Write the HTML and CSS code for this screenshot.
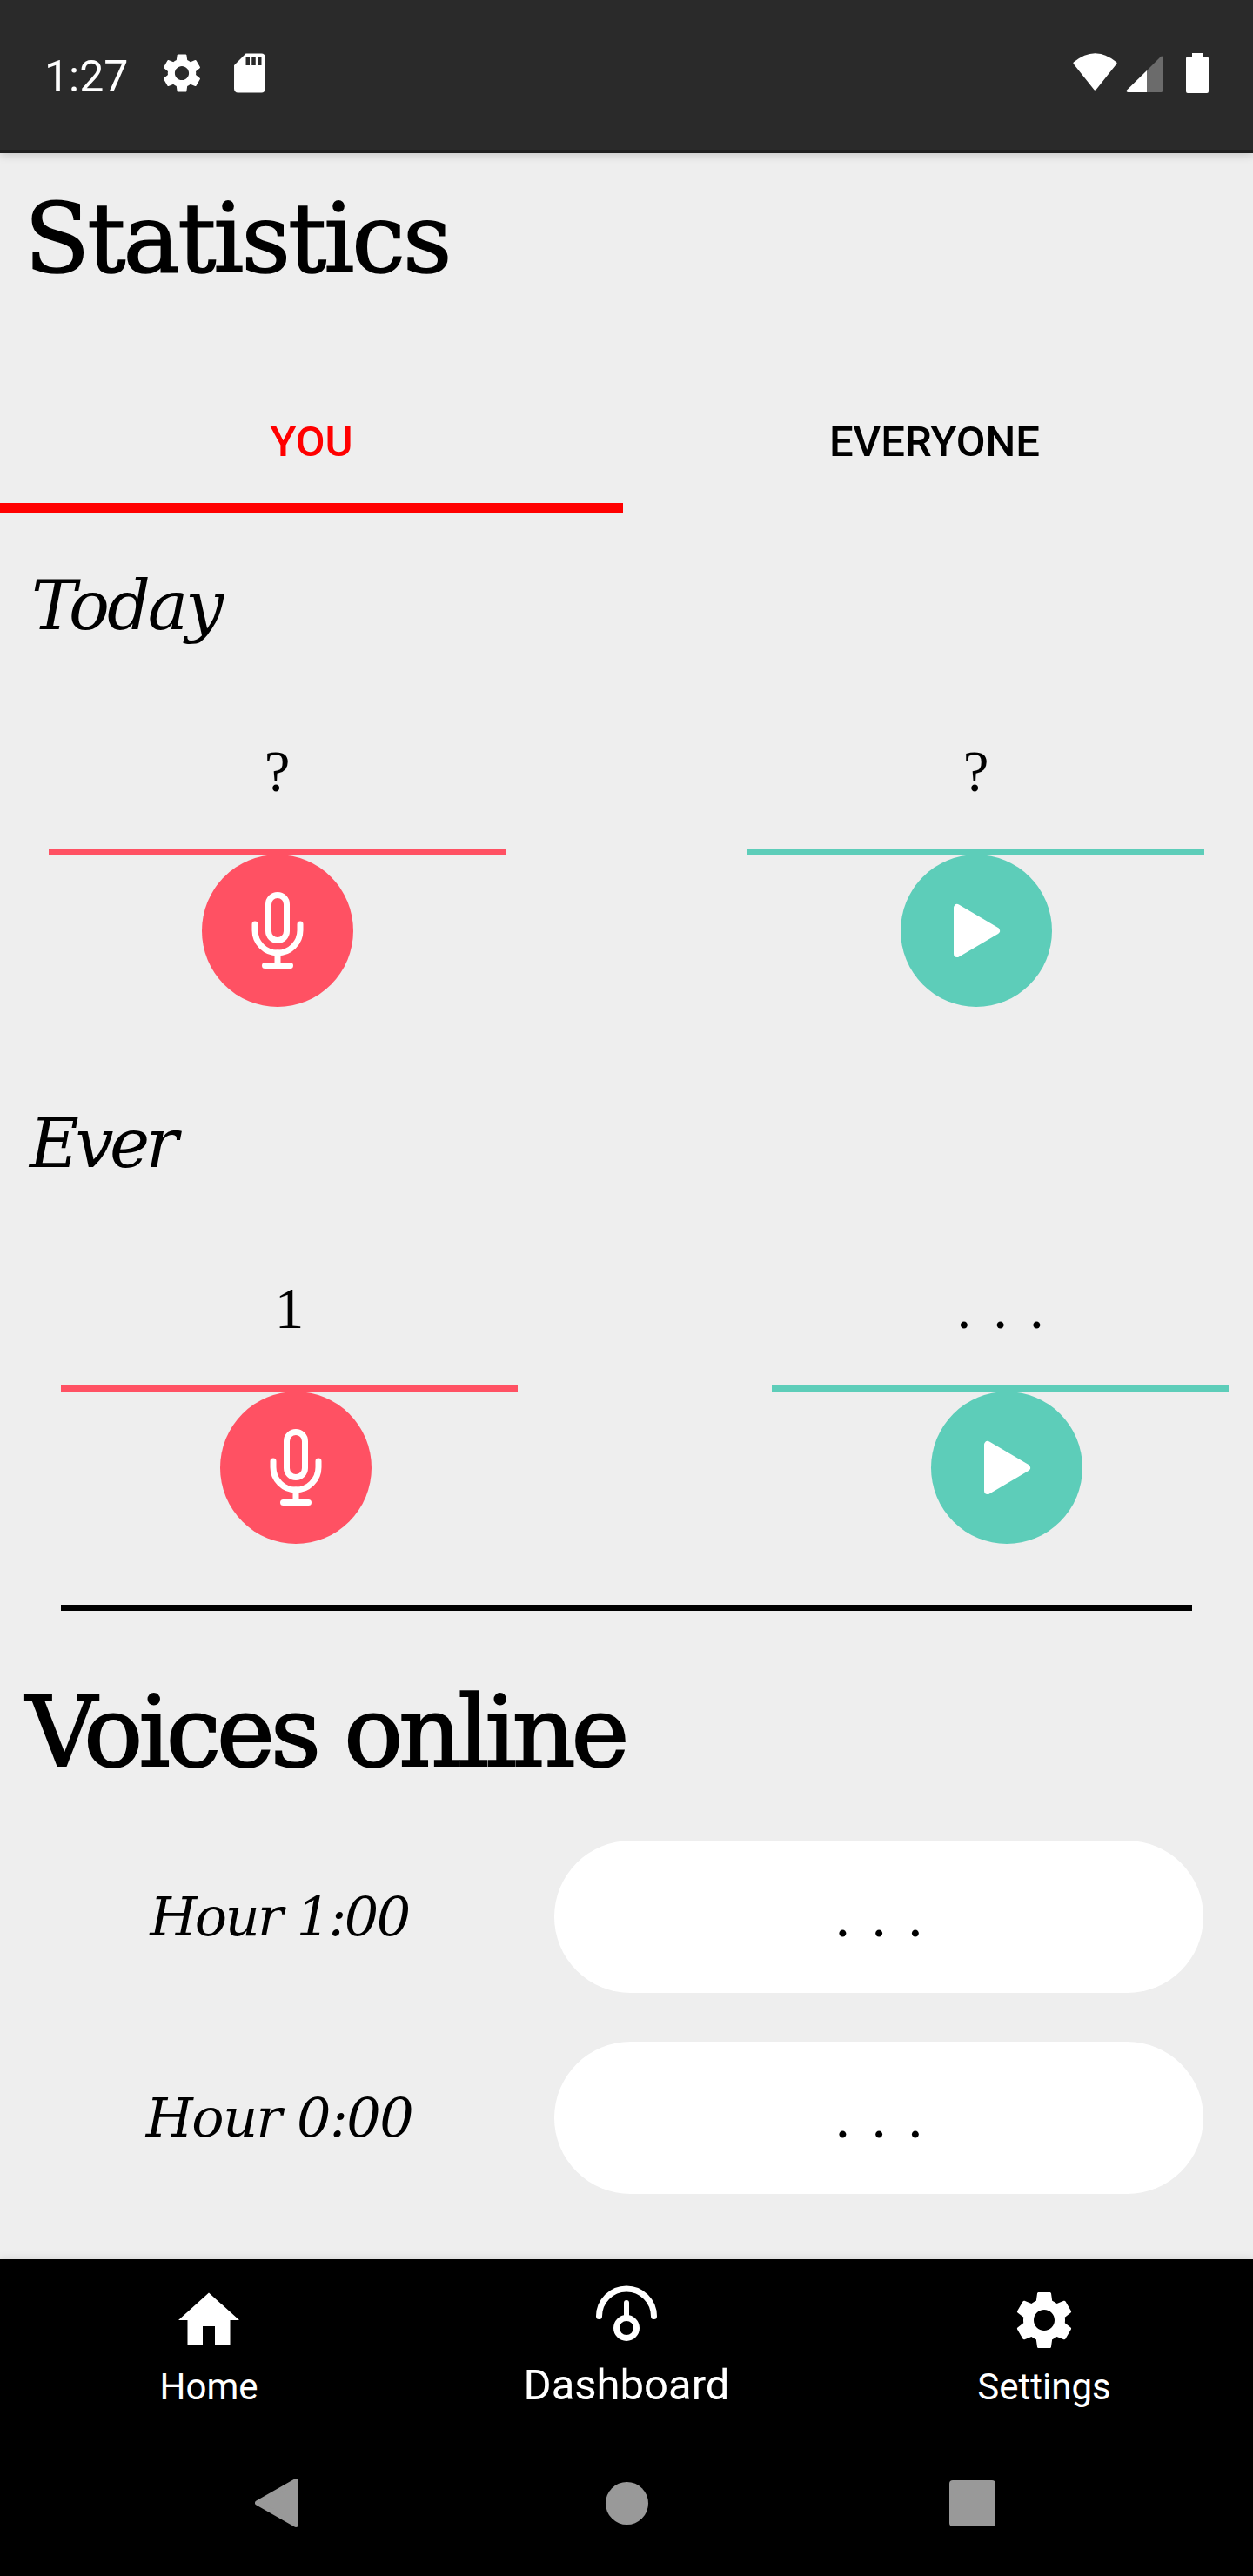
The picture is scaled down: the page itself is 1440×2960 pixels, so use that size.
FILE: index.html
```html
<!DOCTYPE html>
<html lang="en">
  <head>
    <meta charset="UTF-8" />
    <meta name="viewport" content="width=device-width, initial-scale=1.0" />
    <title>Statistics</title>
    <link rel="stylesheet" href="styles.css">
  </head>
  <body>
    <div class="status-bar">
      <span class="status-time">1:27</span>
      <svg class="status-gear" viewBox="0 0 24 24"><path class="gear" d="M19.14 12.94c.04-.3.06-.61.06-.94 0-.32-.02-.64-.07-.94l2.03-1.58c.18-.14.23-.41.12-.61l-1.92-3.32c-.12-.22-.37-.29-.59-.22l-2.39.96c-.5-.38-1.03-.7-1.62-.94l-.36-2.54c-.04-.24-.24-.41-.48-.41h-3.84c-.24 0-.43.17-.47.41l-.36 2.54c-.59.24-1.13.57-1.62.94l-2.39-.96c-.22-.08-.47 0-.59.22L2.74 8.87c-.12.21-.08.47.12.61l2.03 1.58c-.05.3-.09.63-.09.94s.02.64.07.94l-2.03 1.58c-.18.14-.23.41-.12.61l1.92 3.32c.12.22.37.29.59.22l2.39-.96c.5.38 1.03.7 1.62.94l.36 2.54c.05.24.24.41.48.41h3.84c.24 0 .44-.17.47-.41l.36-2.54c.59-.24 1.13-.56 1.62-.94l2.39.96c.22.08.47 0 .59-.22l1.92-3.32c.12-.22.07-.47-.12-.61l-2.01-1.58zM12 15.6c-1.98 0-3.6-1.62-3.6-3.6s1.62-3.6 3.6-3.6 3.6 1.62 3.6 3.6-1.62 3.6-3.6 3.6z"/></svg>
      <svg class="status-sd" viewBox="0 0 24 24"><path class="gear" d="M18 2h-8L4.02 8 4 20c0 1.1.9 2 2 2h12c1.1 0 2-.9 2-2V4c0-1.1-.9-2-2-2zm-6 6h-2V4h2v4zm3 0h-2V4h2v4zm3 0h-2V4h2v4z"/></svg>
      <div class="status-right">
        <svg class="status-wifi" viewBox="0 0 53 46"><path fill="#fff" stroke="#fff" stroke-width="3" stroke-linejoin="round" d="M3 11.5Q26.5-8 50 11.5L26.5 41z"/></svg>
        <svg class="status-signal" viewBox="0 0 42 46">
          <path fill="#6b6b6b" d="M24 20L39.5 4.500Q42 2.500 42 5V43.500Q42 45 40.500 45H24z"/>
          <path fill="#fff" d="M24 20V45H2.500Q-.5 44.500 1 42.500z"/>
        </svg>
        <svg class="status-battery" viewBox="0 0 26 46"><path fill="#fff" d="M7 0h12v4h5q2 0 2 2v38q0 2-2 2H2q-2 0-2-2V6q0-2 2-2h5z"/></svg>
      </div>
    </div>

    <div class="main">
      <h1 class="title">Statistics</h1>

      <div class="tabs">
        <div class="tab tab-active">YOU</div>
        <div class="tab">EVERYONE</div>
      </div>

      <h2 class="period period-today">Today</h2>
      <div class="stat-row stat-row-today">
        <div class="stat stat-red">
          <div class="stat-value">?</div>
          <div class="stat-btn">
            <svg class="btn-icon" viewBox="0 0 174 174">
              <g fill="none" stroke="#fff" stroke-width="7" stroke-linecap="round">
                <rect x="76.500" y="46.500" width="21" height="52" rx="10.500"/>
                <path d="M61 80v7a26 26 0 0 0 52 0v-7"/>
                <path d="M87 113v15M72.500 127.500h29"/>
              </g>
            </svg>
          </div>
        </div>
        <div class="stat stat-teal">
          <div class="stat-value">?</div>
          <div class="stat-btn">
            <svg class="btn-icon" viewBox="0 0 174 174"><path fill="#fff" stroke="#fff" stroke-width="8" stroke-linejoin="round" d="M65 61v53l45-26.500z"/></svg>
          </div>
        </div>
      </div>

      <h2 class="period period-ever">Ever</h2>
      <div class="stat-row stat-row-ever">
        <div class="stat stat-red">
          <div class="stat-value">1</div>
          <div class="stat-btn">
            <svg class="btn-icon" viewBox="0 0 174 174">
              <g fill="none" stroke="#fff" stroke-width="7" stroke-linecap="round">
                <rect x="76.500" y="46.500" width="21" height="52" rx="10.500"/>
                <path d="M61 80v7a26 26 0 0 0 52 0v-7"/>
                <path d="M87 113v15M72.500 127.500h29"/>
              </g>
            </svg>
          </div>
        </div>
        <div class="stat stat-teal">
          <div class="stat-value dots">...</div>
          <div class="stat-btn">
            <svg class="btn-icon" viewBox="0 0 174 174"><path fill="#fff" stroke="#fff" stroke-width="8" stroke-linejoin="round" d="M65 61v53l45-26.500z"/></svg>
          </div>
        </div>
      </div>

      <div class="divider"></div>

      <h1 class="title-voices">Voices online</h1>

      <div class="hours">
        <div class="hour-row">
          <div class="hour-label">Hour 1:00</div>
          <div class="hour-pill dots">...</div>
        </div>
        <div class="hour-row">
          <div class="hour-label hour-label-wide">Hour 0:00</div>
          <div class="hour-pill dots">...</div>
        </div>
      </div>
    </div>

    <div class="bottom">
      <div class="nav">
        <div class="nav-item">
          <svg class="nav-icon" viewBox="0 0 24 24"><path fill="#fff" d="M10 20v-6h4v6h5v-8h3L12 3 2 12h3v8z"/></svg>
          <div class="nav-label">Home</div>
        </div>
        <div class="nav-item nav-item-active">
          <svg class="nav-icon" viewBox="0 0 84 84">
            <g fill="none" stroke="#fff" stroke-width="7" stroke-linecap="round">
              <path d="M10.500 37.500a31.500 31.500 0 0 1 63 0"/>
              <circle cx="42" cy="51" r="11.500"/>
              <path stroke-width="6" d="M42 22v17"/>
            </g>
          </svg>
          <div class="nav-label">Dashboard</div>
        </div>
        <div class="nav-item">
          <svg class="nav-icon nav-icon-gear" viewBox="0 0 24 24"><path class="gear" d="M19.14 12.94c.04-.3.06-.61.06-.94 0-.32-.02-.64-.07-.94l2.03-1.58c.18-.14.23-.41.12-.61l-1.92-3.32c-.12-.22-.37-.29-.59-.22l-2.39.96c-.5-.38-1.03-.7-1.62-.94l-.36-2.54c-.04-.24-.24-.41-.48-.41h-3.84c-.24 0-.43.17-.47.41l-.36 2.54c-.59.24-1.13.57-1.62.94l-2.39-.96c-.22-.08-.47 0-.59.22L2.74 8.87c-.12.21-.08.47.12.61l2.03 1.58c-.05.3-.09.63-.09.94s.02.64.07.94l-2.03 1.58c-.18.14-.23.41-.12.61l1.92 3.32c.12.22.37.29.59.22l2.39-.96c.5.38 1.03.7 1.62.94l.36 2.54c.05.24.24.41.48.41h3.84c.24 0 .44-.17.47-.41l.36-2.54c.59-.24 1.13-.56 1.62-.94l2.39.96c.22.08.47 0 .59-.22l1.92-3.32c.12-.22.07-.47-.12-.61l-2.01-1.58zM12 15.6c-1.98 0-3.6-1.62-3.6-3.6s1.62-3.6 3.6-3.6 3.6 1.62 3.6 3.6-1.62 3.6-3.6 3.6z"/></svg>
          <div class="nav-label">Settings</div>
        </div>
      </div>
      <div class="sys-nav">
        <svg class="sys-back" viewBox="0 0 50 56"><path fill="#999" stroke="#999" stroke-width="6" stroke-linejoin="round" d="M3 28L47 3v50z"/></svg>
        <div class="sys-home"></div>
        <div class="sys-recent"></div>
      </div>
    </div>
  </body>
</html>
```
FILE: styles.css
```css
* {
  box-sizing: border-box;
}
html,
body {
  margin: 0;
  padding: 0;
}
body {
  width: 1440px;
  height: 2960px;
  display: flex;
  flex-direction: column;
  overflow: hidden;
  font-family: Roboto, sans-serif;
  background-color: #eee;
  color: #000;
}
.gear {
  fill: #fff;
}

/* status bar */
.status-bar {
  height: 176px;
  flex: none;
  display: flex;
  align-items: center;
  padding: 0 51px 4px;
  background-color: #2a2a2a;
  border-bottom: 4px solid #1f1f1f;
  box-shadow: 0 2px 10px rgba(0, 0, 0, 0.18);
  z-index: 1;
}
.status-time {
  width: 94px;
  padding-top: 7px;
  font-size: 50px;
  line-height: 56px;
  color: #fff;
  white-space: nowrap;
}
.status-gear {
  width: 54px;
  height: 54px;
  margin-left: 37px;
}
.status-sd {
  width: 54px;
  height: 54px;
  margin-left: 24px;
}
.status-right {
  margin-left: auto;
  display: flex;
  align-items: center;
}
.status-wifi {
  width: 53px;
  height: 46px;
}
.status-signal {
  width: 42px;
  height: 46px;
  margin-left: 9px;
}
.status-battery {
  width: 26px;
  height: 46px;
  margin-left: 27px;
}

/* page */
.main {
  flex: 1;
  min-height: 0;
}
.title {
  margin: 43px 0 0;
  padding-left: 28px;
  font-family: "DejaVu Serif", serif;
  font-weight: normal;
  font-size: 110px;
  line-height: 110px;
  letter-spacing: -3px;
  -webkit-text-stroke: 1.5px #000;
}
.tabs {
  display: flex;
  margin-top: 155px;
}
.tab {
  width: 716px;
  padding-bottom: 46px;
  border-bottom: 11px solid transparent;
  text-align: center;
  font-size: 49px;
  line-height: 48px;
  font-weight: 500;
}
.tab-active {
  color: #f00;
  border-bottom-color: #f00;
}
.period {
  margin: 0;
  font-family: "DejaVu Serif", serif;
  font-style: italic;
  font-weight: normal;
  font-size: 78px;
  line-height: 86px;
}
.period-today {
  margin-top: 64px;
  padding-left: 36px;
  letter-spacing: -3px;
}
.period-ever {
  margin-top: 114px;
  padding-left: 34px;
  letter-spacing: -4.5px;
}
.stat-row {
  display: flex;
  justify-content: space-between;
  margin-top: 113px;
  padding: 0 56px;
}
.stat-row-today {
  margin-top: 114px;
}
.stat-row-ever {
  padding: 0 28px 0 70px;
}
.stat {
  width: 525px;
}
.stat-value {
  height: 129px;
  border-bottom: 7px solid;
  text-align: center;
  font-family: "Liberation Serif", serif;
  font-size: 67px;
  line-height: 67px;
}
.stat-red .stat-value {
  border-color: #ff5163;
}
.stat-teal .stat-value {
  border-color: #5dcdb9;
}
.stat-btn {
  width: 174px;
  height: 175px;
  margin: 0 auto;
  border-radius: 50%;
}
.stat-row-ever .stat-btn {
  transform: translateX(7px);
}
.stat-red .stat-btn {
  background-color: #ff5163;
}
.stat-teal .stat-btn {
  background-color: #5dcdb9;
}
.btn-icon {
  display: block;
  width: 174px;
  height: 174px;
}
.dots {
  padding-left: 25px;
  letter-spacing: 25px;
}
.divider {
  height: 7px;
  margin: 70px 70px 0;
  background-color: #000;
}
.title-voices {
  margin: 83px 0 0;
  padding-left: 30px;
  font-family: "DejaVu Serif", serif;
  font-weight: normal;
  font-size: 113px;
  line-height: 113px;
  letter-spacing: -4.9px;
  -webkit-text-stroke: 2px #000;
}
.hours {
  display: flex;
  flex-direction: column;
  gap: 56px;
  margin-top: 68px;
}
.hour-row {
  display: grid;
  grid-template-columns: 637px 746px;
  align-items: center;
}
.hour-label {
  padding-left: 5px;
  text-align: center;
  font-family: "DejaVu Serif", serif;
  font-style: italic;
  font-size: 62px;
  line-height: 69px;
  letter-spacing: -2.5px;
}
.hour-label-wide {
  letter-spacing: -1.5px;
}
.hour-pill {
  height: 175px;
  border-radius: 88px;
  background-color: #fff;
  text-align: center;
  font-family: "Liberation Serif", serif;
  font-size: 67px;
  line-height: 175px;
}

/* bottom navigation */
.bottom {
  height: 364px;
  flex: none;
  background-color: #000;
  color: #fff;
  box-shadow: 0 -2px 8px rgba(0, 0, 0, 0.08);
  z-index: 1;
}
.nav {
  display: flex;
  height: 224px;
  padding-top: 28px;
}
.nav-item {
  width: 480px;
  display: flex;
  flex-direction: column;
  align-items: center;
}
.nav-icon {
  width: 84px;
  height: 84px;
}
.nav-icon-gear {
  padding: 2px;
}
.nav-label {
  margin-top: 5px;
  font-size: 42px;
  line-height: 60px;
}
.nav-item-active .nav-label {
  margin-top: 3px;
  font-size: 49px;
}
.sys-nav {
  display: flex;
  align-items: center;
  height: 112px;
  padding-left: 293px;
}
.sys-back {
  width: 50px;
  height: 56px;
}
.sys-home {
  width: 49px;
  height: 49px;
  margin-left: 353px;
  border-radius: 50%;
  background-color: #999;
}
.sys-recent {
  width: 53px;
  height: 53px;
  margin-left: 346px;
  border-radius: 4px;
  background-color: #999;
}
```
